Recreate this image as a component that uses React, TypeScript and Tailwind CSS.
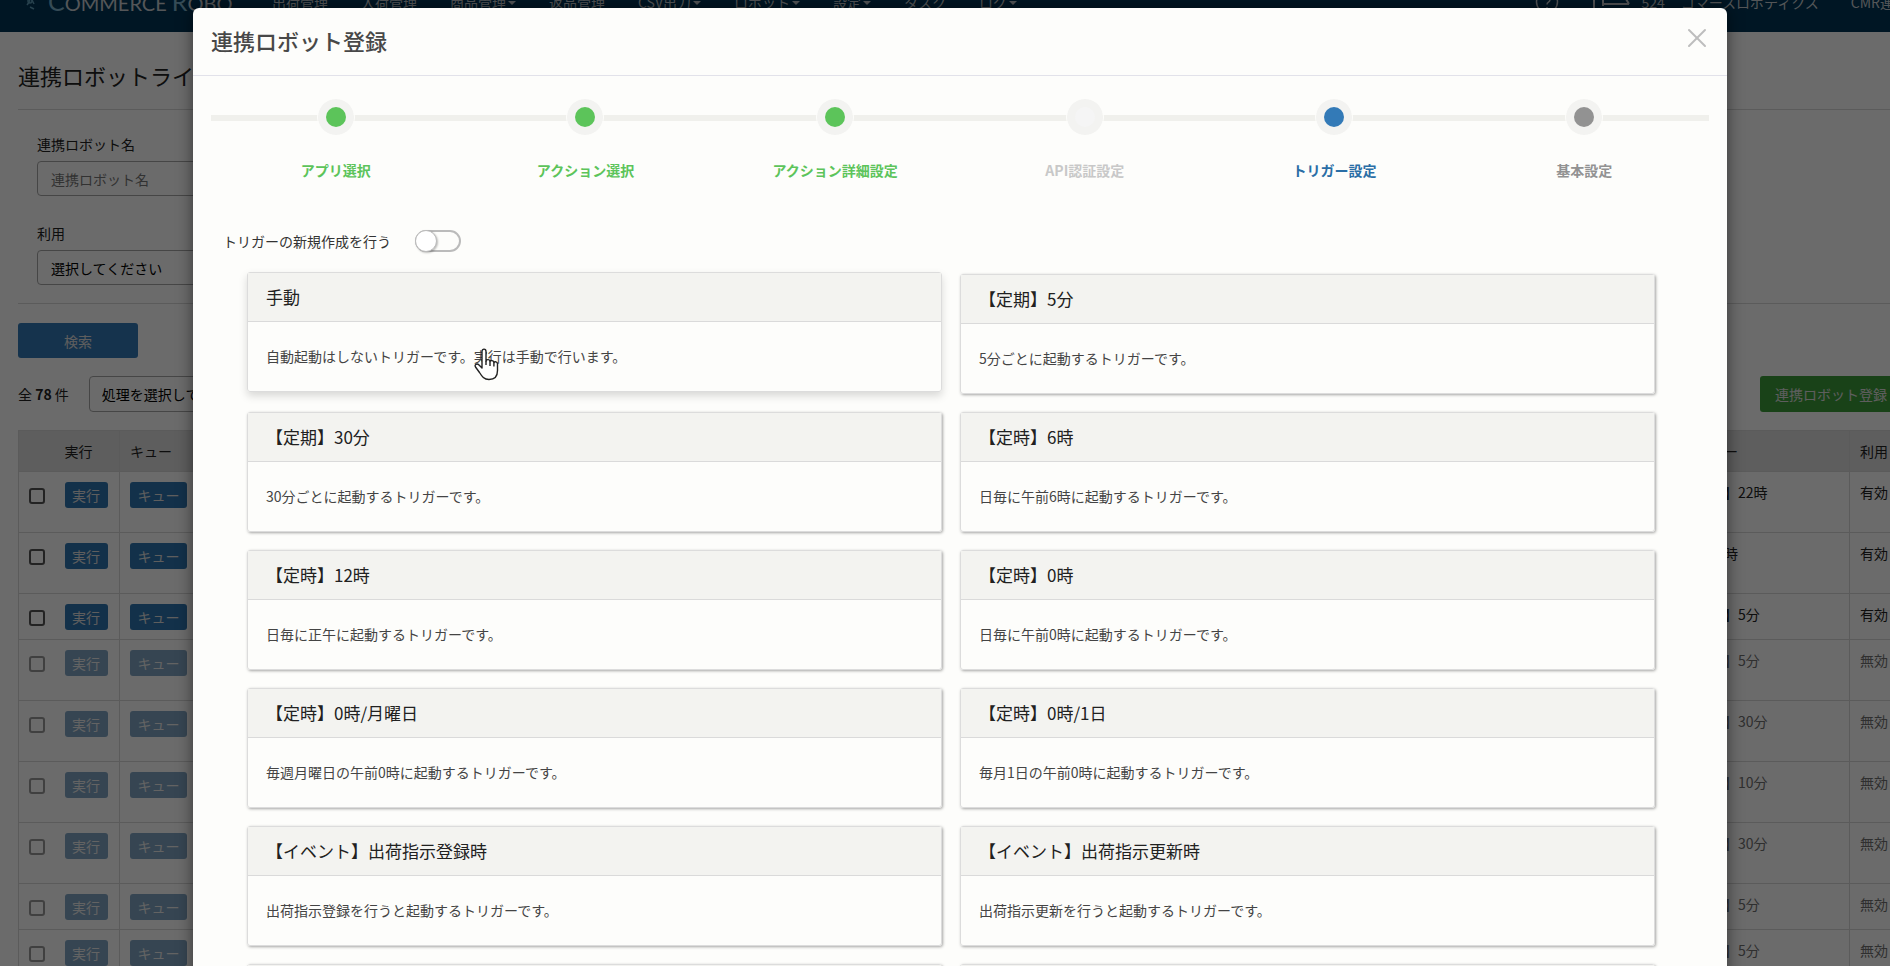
import React, { useState } from 'react';
import { X } from 'lucide-react';
import clsx from 'clsx';

interface NavItem {
  label: string;
  caret?: boolean;
}

interface Step {
  label: string;
  status: 'done' | 'skipped' | 'current' | 'pending';
}

interface Trigger {
  title: string;
  description: string;
}

interface RobotRow {
  trigger: string;
  enabled: boolean;
  compact?: boolean;
}

const navItems: NavItem[] = [
  { label: '出荷管理' },
  { label: '入荷管理' },
  { label: '商品管理', caret: true },
  { label: '返品管理' },
  { label: 'CSV出力', caret: true },
  { label: 'ロボット', caret: true },
  { label: '設定', caret: true },
  { label: 'タスク' },
  { label: 'ログ', caret: true },
];

const steps: Step[] = [
  { label: 'アプリ選択', status: 'done' },
  { label: 'アクション選択', status: 'done' },
  { label: 'アクション詳細設定', status: 'done' },
  { label: 'API認証設定', status: 'skipped' },
  { label: 'トリガー設定', status: 'current' },
  { label: '基本設定', status: 'pending' },
];

const triggers: Trigger[] = [
  { title: '手動', description: '自動起動はしないトリガーです。実行は手動で行います。' },
  { title: '【定期】5分', description: '5分ごとに起動するトリガーです。' },
  { title: '【定期】30分', description: '30分ごとに起動するトリガーです。' },
  { title: '【定時】6時', description: '日毎に午前6時に起動するトリガーです。' },
  { title: '【定時】12時', description: '日毎に正午に起動するトリガーです。' },
  { title: '【定時】0時', description: '日毎に午前0時に起動するトリガーです。' },
  { title: '【定時】0時/月曜日', description: '毎週月曜日の午前0時に起動するトリガーです。' },
  { title: '【定時】0時/1日', description: '毎月1日の午前0時に起動するトリガーです。' },
  { title: '【イベント】出荷指示登録時', description: '出荷指示登録を行うと起動するトリガーです。' },
  { title: '【イベント】出荷指示更新時', description: '出荷指示更新を行うと起動するトリガーです。' },
  { title: '【イベント】入荷予定登録時', description: '入荷予定登録を行うと起動するトリガーです。' },
  { title: '【イベント】入荷予定更新時', description: '入荷予定更新を行うと起動するトリガーです。' },
];

const robots: RobotRow[] = [
  { trigger: '【定時】22時', enabled: true },
  { trigger: '毎日正時', enabled: true },
  { trigger: '【定期】5分', enabled: true, compact: true },
  { trigger: '【定期】5分', enabled: false },
  { trigger: '【定期】30分', enabled: false },
  { trigger: '【定期】10分', enabled: false },
  { trigger: '【定期】30分', enabled: false },
  { trigger: '【定期】5分', enabled: false, compact: true },
  { trigger: '【定期】5分', enabled: false },
];

const dotColors: Record<Step['status'], string> = {
  done: 'bg-[#5cc45a]',
  skipped: 'bg-[#f5f5f5]',
  current: 'bg-[#337ab7]',
  pending: 'bg-[#929292]',
};

const labelColors: Record<Step['status'], string> = {
  done: 'text-[#5cc45a]',
  skipped: 'text-[#c8c8c8]',
  current: 'text-[#2a6ea6]',
  pending: 'text-[#929292]',
};

const Navbar: React.FC = () => (
  <header className="-mt-7 flex h-[60px] items-center bg-[#003556] pl-6 pr-3 text-[#c8ced2]">
    <a href="#" className="flex w-[248px] items-center gap-3 font-['Lato',sans-serif]">
      <svg width="12" height="20" viewBox="0 0 12 20" fill="none" stroke="#5d9bb8" strokeWidth="1.5">
        <path d="M2 4l4 5M6 9l-3 4M8 8l2 4M6 15l4 2" />
        <circle cx="6" cy="9" r="2" />
      </svg>
      <span className="whitespace-nowrap text-xl leading-6">
        <span className="text-[25px] leading-6 text-[#7fb2cc]">C</span>OMMERCE{' '}
        <span className="text-[25px] leading-6 text-[#7fb2cc]">R</span>OBO
      </span>
    </a>
    <nav className="flex flex-1 gap-[33px]">
      {navItems.map((item) => (
        <a key={item.label} href="#" className="flex items-center gap-0.5 whitespace-nowrap">
          {item.label}
          {item.caret && (
            <span className="mt-0.5 border-x-4 border-t-4 border-x-transparent border-t-current" />
          )}
        </a>
      ))}
    </nav>
    <div className="flex items-center whitespace-nowrap">
      <a href="#" aria-label="ヘルプ" className="mr-8">
        <svg width="24" height="24" viewBox="0 0 24 24" fill="none" stroke="currentColor" strokeWidth="1.5">
          <circle cx="12" cy="12" r="10.5" />
          <path d="M9 9.500a3 3 0 1 1 4.500 2.600c-1 .6-1.500 1.200-1.500 2.400M12 17v1.500" />
        </svg>
      </a>
      <svg className="mr-2.5" width="40" height="24" viewBox="0 0 40 24" fill="none" stroke="currentColor" strokeWidth="2">
        <path d="M3 4v16M1 20h6M12 4v12M12 14h26M12 4h20l6 10" />
      </svg>
      <span className="mr-4">524</span>
      <span className="mr-8">コマースロボティクス</span>
      <span>CMR連携</span>
    </div>
  </header>
);

const SearchPanel: React.FC = () => (
  <form onSubmit={(e) => e.preventDefault()}>
    <fieldset className="mt-[18px] border-y border-[#d8d8d8] px-[19px] pb-[18px] pt-6">
      <label htmlFor="robot-name" className="block leading-5">
        連携ロボット名
      </label>
      <input
        id="robot-name"
        type="text"
        placeholder="連携ロボット名"
        className="mt-[7px] block h-[35px] w-[420px] rounded-sm border border-[#a8a8a8] px-[13px] placeholder:text-[#777]"
      />
      <label htmlFor="robot-usage" className="mt-[27px] block leading-5">
        利用
      </label>
      <select
        id="robot-usage"
        className="mt-[7px] block h-[35px] w-[420px] appearance-none rounded-sm border border-[#a8a8a8] px-[13px] text-black"
      >
        <option>選択してください</option>
      </select>
    </fieldset>
    <button type="submit" className="mt-[19px] h-[35px] w-[120px] rounded-[3px] bg-[#337ab7] text-[#e0e0e0]">
      検索
    </button>
  </form>
);

const RobotTable: React.FC = () => (
  <table className="mt-[18px] w-full table-fixed border-collapse border border-[#d8d8d8] text-left">
    <thead>
      <tr className="h-[41px] border-b border-[#d8d8d8] bg-[#e0e0e0]">
        <th className="w-9" />
        <th className="w-[65px] px-2.5 font-normal">実行</th>
        <th className="w-[80px] border-x border-[#d8d8d8] px-2.5 font-normal">キュー</th>
        <th className="px-2.5 font-normal">連携ロボット名</th>
        <th className="w-[178px] border-x border-[#d8d8d8] px-2.5 font-normal">トリガー</th>
        <th className="w-[52px] px-2.5 font-normal">利用</th>
      </tr>
    </thead>
    <tbody>
      {robots.map((robot, i) => (
        <tr
          key={i}
          className={clsx(
            'border-b border-[#d8d8d8] align-top',
            robot.compact ? 'h-[46px]' : 'h-[61px]',
            !robot.enabled && 'text-[#707070]',
          )}
        >
          <td className="pl-2.5 pt-4">
            <input
              type="checkbox"
              aria-label={`${robot.trigger}を選択`}
              className={clsx(
                'block size-4 appearance-none rounded-[3px] border-2',
                robot.enabled ? 'border-[#555]' : 'border-[#999]',
              )}
            />
          </td>
          <td className="px-2.5 pt-2.5">
            <button
              className={clsx(
                'block h-[26px] w-[43px] rounded-[3px] text-[#e0e0e0]',
                robot.enabled ? 'bg-[#2f75b0]' : 'bg-[#2c6a9e] opacity-60',
              )}
            >
              実行
            </button>
          </td>
          <td className="border-x border-[#d8d8d8] px-2.5 pt-2.5">
            <button
              className={clsx(
                'block h-[26px] w-[57px] rounded-[3px] text-[#e0e0e0]',
                robot.enabled ? 'bg-[#2f75b0]' : 'bg-[#2c6a9e] opacity-60',
              )}
            >
              キュー
            </button>
          </td>
          <td />
          <td className="border-x border-[#d8d8d8] px-2.5 pt-2.5">{robot.trigger}</td>
          <td className="whitespace-nowrap px-2.5 pt-2.5">{robot.enabled ? '有効' : '無効'}</td>
        </tr>
      ))}
    </tbody>
  </table>
);

const Stepper: React.FC = () => (
  <ol className="relative grid grid-cols-6">
    <li aria-hidden="true" className="absolute inset-x-0 top-4 h-1.5 bg-[#f0f0ec]" />
    {steps.map((step) => (
      <li key={step.label} className="relative flex flex-col items-center">
        <span className="flex size-9 items-center justify-center rounded-full bg-[#f3f3f1] outline-1 outline-[#fdfdfb]">
          <span className={clsx('size-5 rounded-full', dotColors[step.status])} />
        </span>
        <span className={clsx('mt-[23px] font-bold leading-6', labelColors[step.status])}>{step.label}</span>
      </li>
    ))}
  </ol>
);

const TriggerCard: React.FC<{ trigger: Trigger; hovered: boolean }> = ({ trigger, hovered }) => (
  <button
    type="button"
    className={clsx(
      'rounded-[3px] border border-[#dcdcdc] text-left',
      hovered ? '-translate-y-0.5 shadow-[0_4px_8px_rgba(0,0,0,0.15)]' : 'shadow-[1px_1px_3px_rgba(0,0,0,0.35)]',
    )}
  >
    <span className="block border-b border-[#dadada] bg-[#f3f3f0] px-[18px] py-3 text-[17px] leading-6 text-[#212121]">
      {trigger.title}
    </span>
    <span className="block px-[18px] py-6 leading-[21px] text-[#444]">{trigger.description}</span>
  </button>
);

const HandCursor: React.FC = () => (
  <svg
    className="pointer-events-none absolute left-[263px] top-[74px]"
    width="25"
    height="33"
    viewBox="0 0 25 33"
    fill="#fff"
    stroke="#222"
    strokeWidth="1.400"
    strokeLinejoin="round"
  >
    <path d="M8 20V3.500C8 .3 12 .3 12 3.500V13c.5-2 4-1.700 4 .5.600-1.500 3.800-1.200 3.900 1 .8-1.200 3.600-.8 3.600 1.500v6.500c0 5.500-3 9-8.500 9-5 0-7-3-9.500-7L1.500 19c-1.500-2.500 1.500-4 3.500-2z" />
    <path d="M12 13v4M16 13.500V18M19.900 14.500V18.500" fill="none" />
  </svg>
);

const RegisterModal: React.FC = () => {
  const [createNew, setCreateNew] = useState(false);

  return (
    <div
      role="dialog"
      aria-label="連携ロボット登録"
      className="mx-[193px] mt-2 rounded-md bg-[#fdfdfb] pb-10 shadow-[0_0_16px_rgba(0,0,0,0.5)]"
    >
      <div className="flex h-[68px] items-start justify-between border-b border-[#e2e2ea] px-[18px]">
        <h2 className="mt-4 text-[22px] font-medium leading-8 text-[#484848]">連携ロボット登録</h2>
        <button type="button" aria-label="閉じる" className="-mr-1 mt-3.5 text-[#bdbdbd]">
          <X size={32} strokeWidth={1.5} />
        </button>
      </div>
      <div className="px-[18px] pt-[23px]">
        <Stepper />
        <div className="mt-[47px] flex items-center gap-6 pl-3 text-[#333]">
          <label htmlFor="create-trigger" className="leading-6">
            トリガーの新規作成を行う
          </label>
          <input
            id="create-trigger"
            type="checkbox"
            role="switch"
            checked={createNew}
            onChange={(e) => setCreateNew(e.target.checked)}
            className="h-[22px] w-[46px] appearance-none rounded-full border-2 border-[#bbb] bg-[#fdfdfb] before:-ml-0.5 before:-mt-0.5 before:block before:size-[22px] before:rounded-full before:border before:border-[#bbb] before:bg-white before:shadow-[1px_1px_2px_rgba(0,0,0,0.25)] checked:bg-[#5cc45a] checked:before:ml-[22px]"
          />
        </div>
        <div className="relative mt-[21px] grid grid-cols-2 gap-[18px] pl-9 pr-[54px]">
          {triggers.map((trigger, i) => (
            <TriggerCard key={trigger.title} trigger={trigger} hovered={i === 0} />
          ))}
          <HandCursor />
        </div>
      </div>
    </div>
  );
};

export default function App() {
  return (
    <div className="relative h-screen overflow-hidden bg-white font-['Noto_Sans_CJK_JP','Noto_Sans',sans-serif] text-sm text-[#222]">
      <div className="w-[calc(100%+30px)]">
        <Navbar />
        <main className="px-[18px] pt-[27px]">
          <h1 className="text-[22px] leading-8">連携ロボットライブラリ</h1>
          <SearchPanel />
          <div className="mt-[18px] flex items-center gap-5">
            <p>
              全 <b>78</b> 件
            </p>
            <select
              aria-label="一括処理"
              className="h-9 w-60 appearance-none rounded-sm border border-[#a8a8a8] px-3 text-black"
            >
              <option>処理を選択してください</option>
            </select>
            <button type="button" className="ml-auto h-9 rounded-[3px] bg-[#3c9e3a] px-[15px] text-[#e0e0e0]">
              連携ロボット登録
            </button>
          </div>
          <RobotTable />
        </main>
      </div>
      <div className="absolute inset-y-0 left-0 w-[calc(100%+30px)] bg-black/58">
        <RegisterModal />
      </div>
    </div>
  );
}
